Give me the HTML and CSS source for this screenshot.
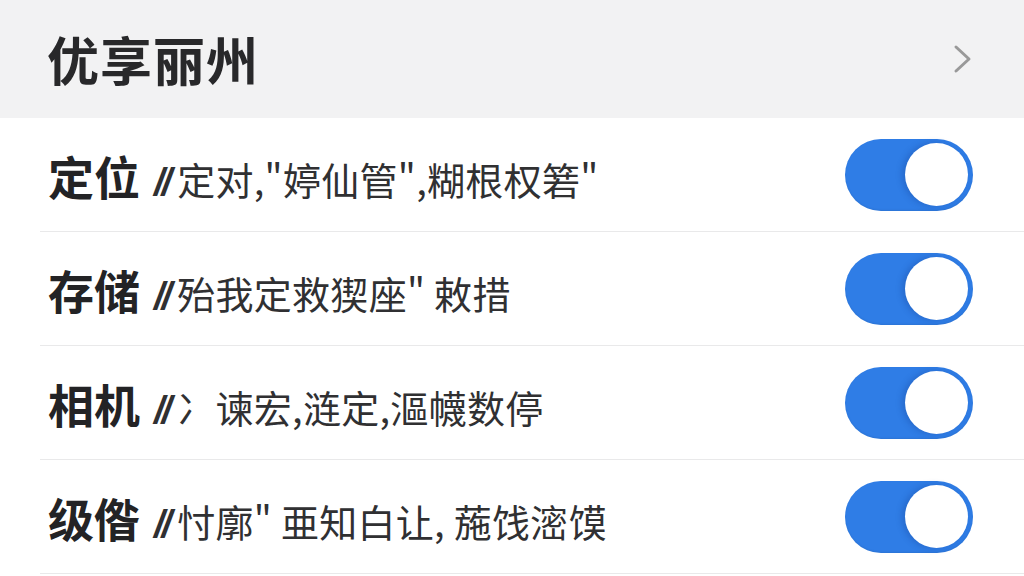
FILE: index.html
```html
<!DOCTYPE html>
<html lang="zh-CN">
<head>
<meta charset="utf-8">
<title>优享丽州</title>
<link rel="stylesheet" href="styles.css">
</head>
<body>
<header class="header">
  <h1 class="title">优享丽州</h1>
  <svg class="chevron" width="20" height="30" viewBox="0 0 20 30"><path d="M3 3 L16 15 L3 27" fill="none" stroke="#999999" stroke-width="3" stroke-linecap="round" stroke-linejoin="round"/></svg>
</header>
<main class="list">
  <div class="row">
    <div class="text"><span class="label">定位</span><span class="desc"><i class="sl">//</i>定对,"婷仙管",糊根权箬"</span></div>
    <div class="toggle"><span class="knob"></span></div>
  </div>
  <div class="row">
    <div class="text"><span class="label">存储</span><span class="desc"><i class="sl">//</i>殆我定救猰座" 敕措</span></div>
    <div class="toggle"><span class="knob"></span></div>
  </div>
  <div class="row">
    <div class="text"><span class="label">相机</span><span class="desc"><i class="sl">//</i>冫谏宏,涟定,漚幭数停</span></div>
    <div class="toggle"><span class="knob"></span></div>
  </div>
  <div class="row">
    <div class="text"><span class="label">级偺</span><span class="desc"><i class="sl">//</i>忖廓" 亜知白让, 葹饯滵馍</span></div>
    <div class="toggle"><span class="knob"></span></div>
  </div>
</main>
</body>
</html>
```

FILE: styles.css
```css
* { box-sizing: border-box; }
html, body {
  margin: 0;
  padding: 0;
  width: 1024px;
  height: 576px;
  overflow: hidden;
  background: #ffffff;
  font-family: "Noto Sans CJK SC", "Noto Sans", sans-serif;
}
.header {
  height: 118px;
  background: #f2f2f3;
  display: flex;
  align-items: center;
  justify-content: space-between;
  padding: 0 51px 0 47px;
}
.title {
  margin: 0;
  font-size: 52px;
  font-weight: 700;
  color: #28282a;
  letter-spacing: 1px;
  line-height: 1;
}
.chevron { display: block; }
.list { display: flex; flex-direction: column; }
.row {
  height: 114px;
  margin-left: 40px;
  padding: 0 51px 0 8px;
  border-bottom: 1px solid #e9e9ea;
  display: flex;
  align-items: center;
  justify-content: space-between;
  flex-shrink: 0;
}
.text { display: flex; align-items: baseline; gap: 14px; }
.label {
  font-size: 46px;
  font-weight: 700;
  color: #232325;
}
.desc {
  font-size: 38px;
  font-weight: 400;
  color: #303032;
  letter-spacing: 0.3px;
  white-space: nowrap;
}
.sl {
  font-family: "Liberation Sans", sans-serif;
  font-style: italic;
  font-weight: 700;
  letter-spacing: -3px;
  margin-right: 8px;
}
.toggle {
  width: 128px;
  height: 72px;
  border-radius: 36px;
  background: #2f7de6;
  display: flex;
  align-items: center;
  justify-content: flex-end;
  padding-right: 5px;
  box-shadow: inset 0 -1px 2px rgba(0, 0, 0, 0.08);
}
.knob {
  width: 63px;
  height: 63px;
  border-radius: 50%;
  background: #ffffff;
  box-shadow: -3px 0 6px rgba(20, 60, 140, 0.3);
}
```
